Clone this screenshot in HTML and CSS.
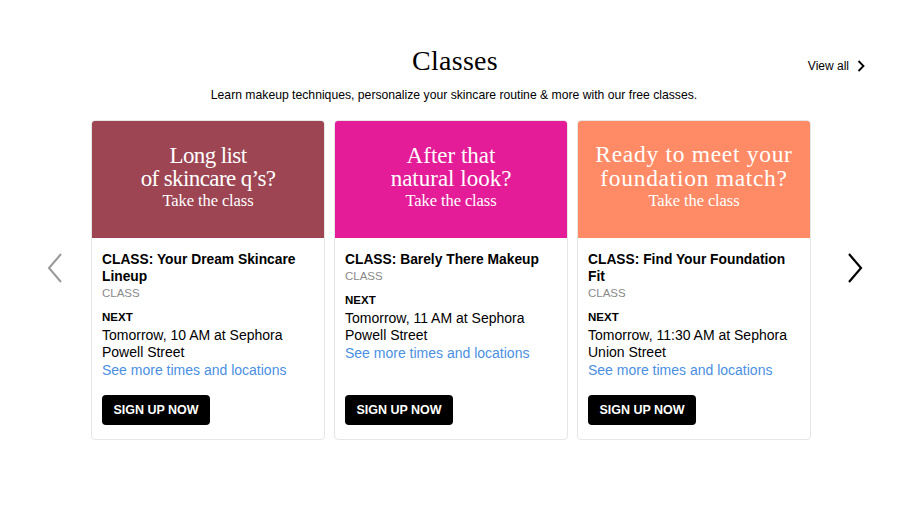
FILE: index.html
```html
<!DOCTYPE html>
<html>
<head>
<meta charset="utf-8">
<link rel="stylesheet" href="styles.css">
</head>
<body>
<section class="classes">
  <header class="head">
    <div class="spacer"></div>
    <h1 class="title">Classes</h1>
    <a class="view-all" href="#">View all
      <svg class="va-chev" width="8" height="12" viewBox="0 0 8 12"><path d="M1.5 1l5 5-5 5" fill="none" stroke="#000" stroke-width="1.8"/></svg>
    </a>
  </header>
  <p class="sub">Learn makeup techniques, personalize your skincare routine &amp; more with our free classes.</p>
  <div class="carousel">
    <button class="arrow prev" aria-label="Previous">
      <svg width="16" height="32" viewBox="0 0 16 32"><path d="M14 2L2 16l12 14" fill="none" stroke="#999" stroke-width="2"/></svg>
    </button>
    <div class="cards">
      <article class="card">
        <div class="hero hero-plum">
          <div class="hero-big">Long list<br>of skincare q’s?</div>
          <div class="hero-small">Take the class</div>
        </div>
        <div class="body">
          <h2 class="name">CLASS: Your Dream Skincare Lineup</h2>
          <div class="type">CLASS</div>
          <div class="next">NEXT</div>
          <div class="when">Tomorrow, 10 AM at Sephora Powell Street</div>
          <a class="more" href="#">See more times and locations</a>
          <button class="signup">SIGN UP NOW</button>
        </div>
      </article>
      <article class="card">
        <div class="hero hero-pink">
          <div class="hero-big">After that<br>natural look?</div>
          <div class="hero-small">Take the class</div>
        </div>
        <div class="body">
          <h2 class="name">CLASS: Barely There Makeup</h2>
          <div class="type">CLASS</div>
          <div class="next">NEXT</div>
          <div class="when">Tomorrow, 11 AM at Sephora Powell Street</div>
          <a class="more" href="#">See more times and locations</a>
          <button class="signup">SIGN UP NOW</button>
        </div>
      </article>
      <article class="card">
        <div class="hero hero-coral">
          <div class="hero-big">Ready to meet your<br>foundation match?</div>
          <div class="hero-small">Take the class</div>
        </div>
        <div class="body">
          <h2 class="name">CLASS: Find Your Foundation Fit</h2>
          <div class="type">CLASS</div>
          <div class="next">NEXT</div>
          <div class="when">Tomorrow, 11:30 AM at Sephora Union Street</div>
          <a class="more" href="#">See more times and locations</a>
          <button class="signup">SIGN UP NOW</button>
        </div>
      </article>
    </div>
    <button class="arrow nextbtn" aria-label="Next">
      <svg width="16" height="32" viewBox="0 0 16 32"><path d="M2 2l12 14L2 30" fill="none" stroke="#000" stroke-width="2.2"/></svg>
    </button>
  </div>
</section>
</body>
</html>
```
FILE: styles.css
```css
html, body {
  margin: 0;
  padding: 0;
  background: #fff;
}
body {
  font-family: "Liberation Sans", Arial, sans-serif;
  color: #000;
  width: 900px;
  height: 506px;
  overflow: hidden;
}
.classes {
  padding-top: 43px;
}
.head {
  display: grid;
  grid-template-columns: 1fr auto 1fr;
  align-items: center;
  padding: 0 36px;
}
.title {
  margin: 0;
  font-family: "Liberation Serif", "Times New Roman", serif;
  font-weight: normal;
  font-size: 28px;
  line-height: 36px;
  letter-spacing: 0.3px;
  padding-left: 10px;
}
.view-all {
  justify-self: end;
  display: flex;
  align-items: center;
  gap: 8px;
  font-size: 12px;
  color: #000;
  text-decoration: none;
  margin-top: 9px;
  margin-right: -1px;
}
.sub {
  margin: 8px 0 0;
  text-align: center;
  font-size: 12.2px;
  line-height: 16px;
  padding-left: 8px;
}
.carousel {
  display: flex;
  align-items: flex-start;
  margin-top: 17px;
}
.arrow {
  background: none;
  border: 0;
  padding: 0;
  display: flex;
  align-items: center;
  justify-content: center;
  height: 32px;
  margin-top: 132px;
}
.prev {
  width: 16px;
  margin-left: 47px;
  margin-right: 28px;
}
.nextbtn {
  width: 16px;
  margin-left: 36px;
}
.cards {
  display: flex;
  gap: 9px;
}
.card {
  width: 234px;
  height: 320px;
  box-sizing: border-box;
  border: 1px solid #e6e6e6;
  border-radius: 4px;
  overflow: hidden;
  display: flex;
  flex-direction: column;
}
.hero {
  height: 117px;
  flex: none;
  color: #fff;
  text-align: center;
  font-family: "Liberation Serif", "Times New Roman", serif;
  display: flex;
  flex-direction: column;
  justify-content: center;
  padding-bottom: 4px;
  box-sizing: border-box;
}
.hero-plum { background: #9d4553; }
.hero-pink { background: #e41c98; }
.hero-coral { background: #ff8b66; }
.hero-big {
  font-size: 23px;
  line-height: 23px;
  letter-spacing: -0.6px;
}
.hero-pink .hero-big {
  letter-spacing: 0;
}
.hero-coral .hero-big {
  font-size: 23.5px;
  line-height: 23.5px;
  letter-spacing: 0.7px;
}
.hero-small {
  font-size: 16.5px;
  line-height: 22px;
  letter-spacing: -0.1px;
}
.body {
  flex: 1;
  display: flex;
  flex-direction: column;
  align-items: flex-start;
  padding: 13px 10px 14px;
}
.name {
  margin: 0;
  font-size: 13.8px;
  line-height: 17px;
  font-weight: bold;
}
.type {
  font-size: 11.5px;
  line-height: 16px;
  color: #8a8a8a;
}
.next {
  margin-top: 9px;
  font-size: 11.5px;
  font-weight: bold;
  line-height: 15px;
}
.when {
  font-size: 14px;
  line-height: 17px;
  margin-top: 2px;
}
.more {
  font-size: 14px;
  line-height: 18px;
  color: #4a90e2;
  text-decoration: none;
}
.signup {
  margin-top: auto;
  background: #000;
  color: #fff;
  border: 0;
  border-radius: 4px;
  font-family: "Liberation Sans", Arial, sans-serif;
  font-weight: bold;
  font-size: 12.5px;
  width: 108px;
  height: 30px;
  padding: 0;
}
```
